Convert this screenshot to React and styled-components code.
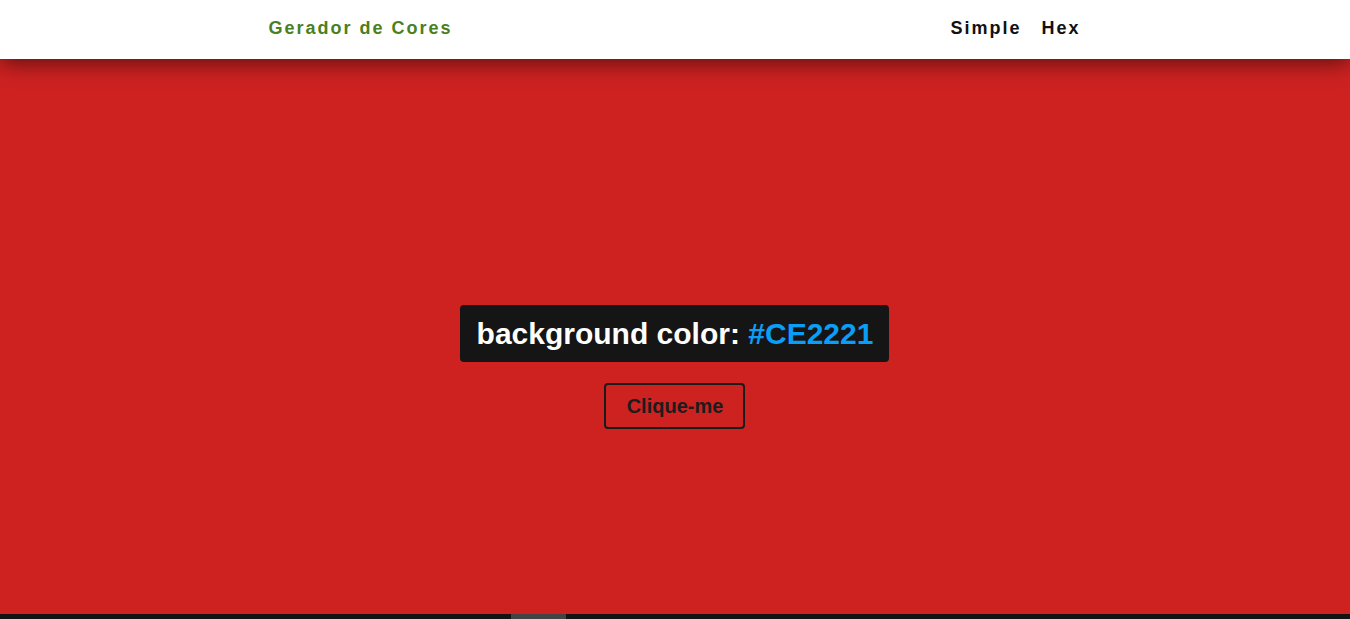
import React, { useState } from 'react';
import styled, { createGlobalStyle } from 'styled-components';

const GlobalStyle = createGlobalStyle`
  * {
    box-sizing: border-box;
  }

  body {
    margin: 0;
    font-family: "Liberation Sans", Arial, sans-serif;
    overflow: hidden;
  }
`;

const randomHex = () => {
  const chars = '0123456789ABCDEF';
  let out = '#';
  for (let i = 0; i < 6; i++) {
    out += chars[Math.floor(Math.random() * 16)];
  }
  return out;
};

const App = () => {
  const [color, setColor] = useState('#CE2221');

  return (
    <>
      <GlobalStyle />
      <Header>
        <NavCenter>
          <Brand>Gerador de Cores</Brand>
          <NavLinks>
            <NavLink>Simple</NavLink>
            <NavLink>Hex</NavLink>
          </NavLinks>
        </NavCenter>
      </Header>
      <Main style={{ backgroundColor: color }}>
        <ColorLabel>
          background color: <ColorCode>{color}</ColorCode>
        </ColorLabel>
        <ClickButton onClick={() => setColor(randomHex())}>Clique-me</ClickButton>
      </Main>
      <Taskbar>
        <TaskItem />
      </Taskbar>
    </>
  );
};

// Styled components
const Header = styled.nav`
  position: relative;
  z-index: 2;
  height: 59px;
  background-color: #ffffff;
  box-shadow: 0 4px 22px rgba(0, 0, 0, 0.55);
`;

const NavCenter = styled.div`
  width: 813px;
  height: 100%;
  margin: 0 auto;
  padding: 0 1px 3px 0;
  display: flex;
  align-items: center;
  justify-content: space-between;
`;

const Brand = styled.h4`
  margin: 0;
  font-size: 18px;
  font-weight: bold;
  letter-spacing: 2px;
  color: #4a7f22;
`;

const NavLinks = styled.div`
  display: flex;
  gap: 20px;
`;

const NavLink = styled.a`
  font-size: 18px;
  font-weight: bold;
  letter-spacing: 2px;
  color: #111111;
  cursor: pointer;
`;

const Main = styled.main`
  min-height: 100vh;
  padding: 0 1px 4px 0;
  display: flex;
  flex-direction: column;
  align-items: center;
  justify-content: center;
  gap: 21px;
`;

const ColorLabel = styled.h2`
  margin: 0;
  padding: 11px 16px 11px 17px;
  background-color: #151515;
  border-radius: 4px;
  color: #ffffff;
  font-size: 30px;
  font-weight: bold;
  line-height: 35px;
`;

const ColorCode = styled.span`
  color: #0a9ef7;
`;

const ClickButton = styled.button`
  padding: 9px 20px 9px 21px;
  background: transparent;
  border: 2px solid #1a1a1a;
  border-radius: 4px;
  font-family: "Liberation Sans", Arial, sans-serif;
  font-size: 20px;
  font-weight: bold;
  line-height: 24px;
  color: #1c1c1c;
  cursor: pointer;
`;

const Taskbar = styled.div`
  position: fixed;
  left: 0;
  right: 0;
  bottom: 0;
  height: 5px;
  background-color: #131313;
  z-index: 3;
`;

const TaskItem = styled.div`
  position: absolute;
  left: 511px;
  width: 55px;
  height: 100%;
  background-color: #444444;
`;

export default App;
